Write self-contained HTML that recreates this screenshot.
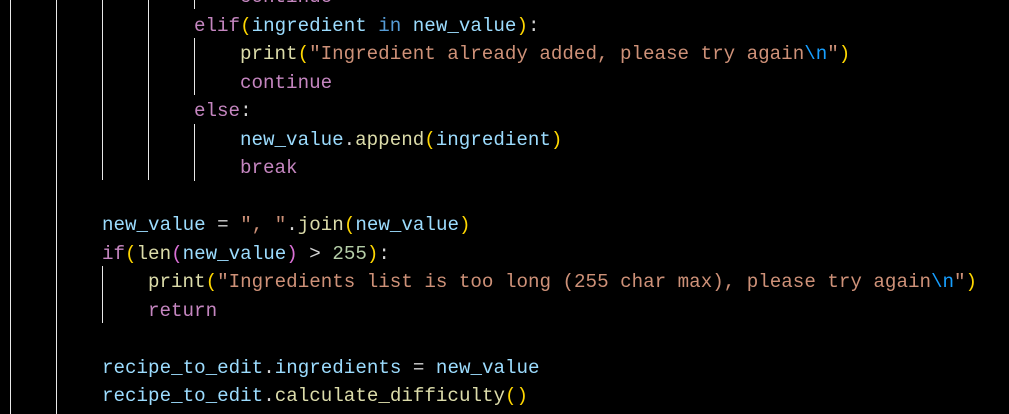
<!DOCTYPE html>
<html><head><style>
html,body{margin:0;padding:0;background:#000;width:1009px;height:414px;overflow:hidden}
.l{position:absolute;white-space:pre;font-family:"Liberation Mono",monospace;font-size:19.2px;line-height:28.5px;color:#9cdcfe}
.g{position:absolute;width:1px;background:#e8e8e8}
.k{color:#c586c0}.b{color:#569cd6}.f{color:#dcdcaa}.s{color:#ce9178}.e{color:#d7ba7d}.n{color:#b5cea8}.w{color:#d4d4d4}
.y{color:#ffd700}.p{color:#da70d6}.c{color:#179fff}
</style></head><body>
<div class="g" style="left:10px;top:0;height:414px"></div>
<div class="g" style="left:56px;top:0;height:414px"></div>
<div class="g" style="left:102px;top:0;height:180px"></div>
<div class="g" style="left:148px;top:0;height:180px"></div>
<div class="g" style="left:194px;top:0;height:9px"></div>
<div class="g" style="left:194px;top:38px;height:57px"></div>
<div class="g" style="left:194px;top:124px;height:57px"></div>
<div class="g" style="left:102px;top:266px;height:57px"></div>

<div class="l k" style="left:240px;top:-17px">continue</div>
<div class="l" style="left:194px;top:11.5px"><span class="k">elif</span><span class="y">(</span>ingredient <span class="b">in</span> new_value<span class="y">)</span><span class="w">:</span></div>
<div class="l" style="left:240px;top:40px"><span class="f">print</span><span class="y">(</span><span class="s">"Ingredient already added, please try again</span><span class="c">\n</span><span class="s">"</span><span class="y">)</span></div>
<div class="l k" style="left:240px;top:68.5px">continue</div>
<div class="l" style="left:194px;top:97px"><span class="k">else</span><span class="w">:</span></div>
<div class="l" style="left:240px;top:125.5px">new_value<span class="w">.</span><span class="f">append</span><span class="y">(</span>ingredient<span class="y">)</span></div>
<div class="l k" style="left:240px;top:154px">break</div>
<div class="l" style="left:102px;top:211px">new_value <span class="w">=</span> <span class="s">", "</span><span class="w">.</span><span class="f">join</span><span class="y">(</span>new_value<span class="y">)</span></div>
<div class="l" style="left:102px;top:239.5px"><span class="k">if</span><span class="y">(</span><span class="f">len</span><span class="p">(</span>new_value<span class="p">)</span> <span class="w">&gt;</span> <span class="n">255</span><span class="y">)</span><span class="w">:</span></div>
<div class="l" style="left:148px;top:268px"><span class="f">print</span><span class="y">(</span><span class="s">"Ingredients list is too long (255 char max), please try again</span><span class="c">\n</span><span class="s">"</span><span class="y">)</span></div>
<div class="l k" style="left:148px;top:296.5px">return</div>
<div class="l" style="left:102px;top:353.5px">recipe_to_edit<span class="w">.</span>ingredients <span class="w">=</span> new_value</div>
<div class="l" style="left:102px;top:382px">recipe_to_edit<span class="w">.</span><span class="f">calculate_difficulty</span><span class="y">()</span></div>
</body></html>
